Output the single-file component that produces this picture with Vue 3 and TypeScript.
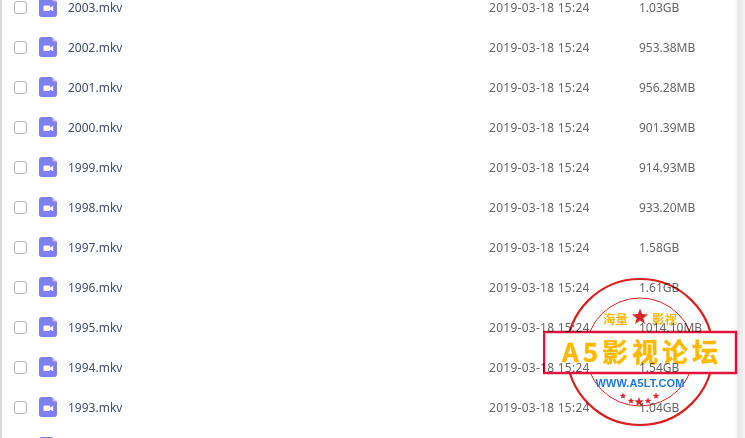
<script setup lang="ts">
const files = [
  { name: '2003.mkv', size: '1.03GB' },
  { name: '2002.mkv', size: '953.38MB' },
  { name: '2001.mkv', size: '956.28MB' },
  { name: '2000.mkv', size: '901.39MB' },
  { name: '1999.mkv', size: '914.93MB' },
  { name: '1998.mkv', size: '933.20MB' },
  { name: '1997.mkv', size: '1.58GB' },
  { name: '1996.mkv', size: '1.61GB' },
  { name: '1995.mkv', size: '1014.10MB' },
  { name: '1994.mkv', size: '1.54GB' },
  { name: '1993.mkv', size: '1.04GB' },
]

function starPoints(cx: number, cy: number, r: number) {
  const pts: string[] = []
  for (let i = 0; i < 10; i++) {
    const rad = i % 2 ? r * 0.42 : r
    const a = -Math.PI / 2 + (i * Math.PI) / 5
    pts.push(`${(cx + rad * Math.cos(a)).toFixed(1)},${(cy + rad * Math.sin(a)).toFixed(1)}`)
  }
  return pts.join(' ')
}

const smallStars = [
  { x: 80, y: 119, r: 3.5 },
  { x: 88, y: 124, r: 3.5 },
  { x: 96, y: 125, r: 5 },
  { x: 105, y: 124, r: 3.5 },
  { x: 113, y: 119, r: 3.5 },
]
</script>

<template>
  <div class="page">
    <ul class="list">
      <li v-for="f in files" :key="f.name" class="row">
        <span class="check"></span>
        <svg class="icon" viewBox="0 0 18 20" width="18" height="20">
          <path d="M3 0h10l5 5v12a3 3 0 0 1-3 3H3a3 3 0 0 1-3-3V3a3 3 0 0 1 3-3z" fill="#7f80f0" />
          <path d="M13.500 0l4.500 4.500h-3a1.500 1.500 0 0 1-1.500-1.500z" fill="#c3c4f8" />
          <rect x="4.500" y="8.500" width="6.500" height="5.500" rx="1" fill="#fff" />
          <path d="M11 10.600l3.200-1.800v5.400l-3.200-1.800z" fill="#fff" />
        </svg>
        <span class="name">{{ f.name }}</span>
        <span class="date">2019-03-18 15:24</span>
        <span class="size">{{ f.size }}</span>
      </li>
      <li class="row">
        <span></span>
        <svg class="icon" viewBox="0 0 18 20" width="18" height="20">
          <path d="M3 0h10l5 5v12a3 3 0 0 1-3 3H3a3 3 0 0 1-3-3V3a3 3 0 0 1 3-3z" fill="#7f80f0" />
        </svg>
      </li>
    </ul>

    <div class="edge"></div>

    <svg class="stamp" viewBox="0 0 196 152" width="196" height="152">
      <circle cx="97" cy="75" r="73" fill="none" stroke="#dc2020" stroke-width="2.200" />
      <circle cx="97" cy="75" r="54" fill="none" stroke="#dc2020" stroke-width="1" />
      <rect x="1" y="55" width="192" height="41" fill="#fff" stroke="#e0143c" stroke-width="2.500" />
      <polygon :points="starPoints(97, 40, 8.500)" fill="#d6282b" />
      <text x="60" y="47" class="s-small">海量</text>
      <text x="109" y="47" class="s-small">影视</text>
      <text x="99" y="85" class="s-big">A5影视论坛</text>
      <text x="97" y="110" class="s-url">WWW.A5LT.COM</text>
      <polygon v-for="(s, i) in smallStars" :key="i" :points="starPoints(s.x, s.y, s.r)" fill="#d6282b" />
    </svg>
  </div>
</template>

<style scoped>
.page {
  position: relative;
  width: 745px;
  height: 438px;
  overflow: hidden;
  background: #fff;
  font-family: "Noto Sans", "Noto Sans CJK SC", sans-serif;
  font-size: 12px;
}
.list {
  list-style: none;
  margin: -13px 0 0;
  padding: 0 0 0 12px;
  border-left: 2px solid #d8d8e0;
  box-sizing: border-box;
}
.row {
  display: grid;
  grid-template-columns: 25px 29px 421px 150px 1fr;
  align-items: center;
  height: 40px;
}
.check {
  width: 13px;
  height: 13px;
  box-sizing: border-box;
  border: 1px solid #b4b4b4;
  border-radius: 3px;
}
.name { color: #424e67; }
.date,
.size { color: #666; }
.date { letter-spacing: 0.27px; }
.edge {
  position: absolute;
  top: 0;
  right: 0;
  width: 10px;
  height: 100%;
  background: linear-gradient(to right, #fff, #e6e6e6 35%, #f6f6f6);
}
.stamp {
  position: absolute;
  left: 543px;
  top: 277px;
  mix-blend-mode: multiply;
}
.s-small {
  font-family: "Noto Sans CJK SC", sans-serif;
  font-size: 12.500px;
  font-weight: 700;
  fill: #fdb813;
}
.s-big {
  font-family: "Noto Sans CJK SC", sans-serif;
  font-size: 26px;
  font-weight: 700;
  letter-spacing: 4px;
  fill: #fdb900;
  stroke: #fdb900;
  stroke-width: 0.400px;
  text-anchor: middle;
}
.s-url {
  font-family: "Liberation Sans", sans-serif;
  font-size: 11px;
  font-weight: 700;
  letter-spacing: 0.1px;
  fill: #1f7ae0;
  text-anchor: middle;
}
</style>
